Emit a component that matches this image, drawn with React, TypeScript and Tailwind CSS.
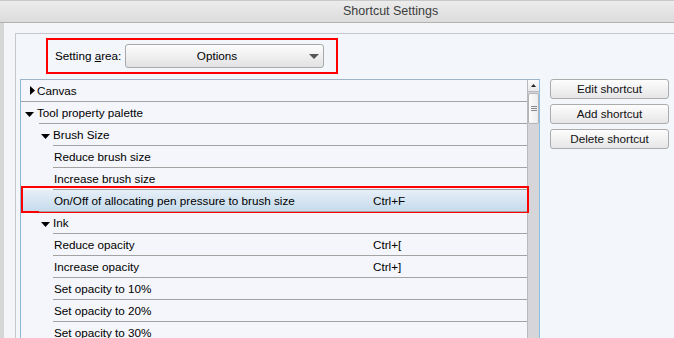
import React from "react";

type Row = {
  label: string;
  lead: number; // width from list inner left (x=21) to text start
  line: number | null; // offset of top separator line from x=21
  arrow?: "right" | "down";
  arrowPr?: number;
  shortcut?: string;
  selected?: boolean;
};

const rows: Row[] = [
  { label: "Canvas", lead: 16, line: null, arrow: "right", arrowPr: 2 },
  { label: "Tool property palette", lead: 16, line: 0, arrow: "down", arrowPr: 3 },
  { label: "Brush Size", lead: 32, line: 18, arrow: "down", arrowPr: 3 },
  { label: "Reduce brush size", lead: 33, line: 32 },
  { label: "Increase brush size", lead: 33, line: 32 },
  { label: "On/Off of allocating pen pressure to brush size", lead: 33, line: 32, shortcut: "Ctrl+F", selected: true },
  { label: "Ink", lead: 32, line: 18, arrow: "down", arrowPr: 3 },
  { label: "Reduce opacity", lead: 33, line: 32, shortcut: "Ctrl+[" },
  { label: "Increase opacity", lead: 33, line: 32, shortcut: "Ctrl+]" },
  { label: "Set opacity to 10%", lead: 33, line: 32 },
  { label: "Set opacity to 20%", lead: 33, line: 32 },
  { label: "Set opacity to 30%", lead: 33, line: 32 },
];

function Arrow({ dir }: { dir: "right" | "down" }) {
  if (dir === "right") {
    return (
      <svg width="5" height="9" viewBox="0 0 5 9" className="block">
        <polygon points="0,0 5,4.5 0,9" fill="#000" />
      </svg>
    );
  }
  return (
    <svg width="9" height="5" viewBox="0 0 9 5" className="block mt-[3px]">
      <polygon points="0,0 9,0 4.5,5" fill="#000" />
    </svg>
  );
}

function TreeRow({ row }: { row: Row }) {
  return (
    <div className="relative flex flex-col">
      {row.line !== null ? (
        <div className="h-px bg-[#a3a3a3]" style={{ marginLeft: row.line }} />
      ) : null}
      <div
        className={
          "h-[21px] flex items-center " +
          (row.selected ? "bg-gradient-to-b from-[#e6eff8] to-[#c6dbec]" : "")
        }
      >
        <div
          className="flex justify-end items-center shrink-0"
          style={{ width: row.lead, paddingRight: row.arrowPr ?? 0 }}
        >
          {row.arrow ? <Arrow dir={row.arrow} /> : null}
        </div>
        <div className="w-[319px] shrink-0 whitespace-nowrap">{row.label}</div>
        {row.shortcut ? <div className="whitespace-nowrap">{row.shortcut}</div> : null}
      </div>
      {row.selected ? (
        <div className="absolute top-[-3px] bottom-[-2px] left-0 right-[-2px] border-2 border-[#ff0000] pointer-events-none" />
      ) : null}
    </div>
  );
}

function Btn({ children }: { children: React.ReactNode }) {
  return (
    <div className="h-[20px] flex items-center justify-center rounded-[3px] border border-[#acacac] bg-gradient-to-b from-[#fdfdfd] to-[#e6e6e8] text-[#111]">
      {children}
    </div>
  );
}

export default function App() {
  return (
    <div
      className="w-[674px] h-[338px] overflow-hidden flex flex-col text-[11.7px] text-black bg-[#f3f5f9]"
      style={{ fontFamily: '"Liberation Sans", Arial, sans-serif' }}
    >
      {/* Title bar */}
      <div className="h-[23px] shrink-0 flex items-center border-t border-[#c9c9c9] border-b border-b-[#b2b2b2] bg-gradient-to-b from-[#ececec] to-[#dcdcdc]">
        <div className="pl-[343px] text-[12.5px] text-[#3c3c3c]">Shortcut Settings</div>
      </div>

      <div className="flex flex-1 min-h-0">
        <div className="w-[4px] shrink-0 bg-[#d6d6d6]" />
        <div className="flex-1 pl-[11px] pt-[10px] flex min-h-0">
          <div className="flex-1 border-l border-t border-[#c4c7cc] bg-[#f3f6fb] flex flex-col min-h-0">
            {/* Setting area */}
            <div className="mt-[4px] ml-[30px] w-[292px] h-[36px] border-2 border-[#ff0000] flex items-center pl-[7px] pr-[12px]">
              <div className="w-[70px] shrink-0 whitespace-nowrap">
                Setting <span className="underline">a</span>rea:
              </div>
              <div className="h-[24px] flex-1 flex items-center rounded-[3px] border border-[#a9a9a9] bg-gradient-to-b from-[#fdfdfd] to-[#e2e2e4]">
                <div className="flex-1 text-center">Options</div>
                <div className="w-[15px] pr-[4px] flex justify-end">
                  <svg width="10" height="5" viewBox="0 0 10 5" className="block">
                    <polygon points="0,0 10,0 5,5" fill="#555" />
                  </svg>
                </div>
              </div>
            </div>

            {/* List + buttons */}
            <div className="mt-[5px] ml-[4px] flex gap-[10px] min-h-0 flex-1">
              <div className="w-[520px] h-[300px] shrink-0 flex border-l border-t border-l-[#8fb6cf] border-t-[#9fb4c4] border-r border-r-[#86c2e4] bg-[#f4f6fb]">
                <div className="flex-1 flex flex-col">
                  {rows.map((r, i) => (
                    <TreeRow key={i} row={r} />
                  ))}
                </div>
                <div className="w-[12px] shrink-0 bg-[#d5d5da] border-l border-[#b9b9be] flex flex-col">
                  <div className="h-[12px] bg-gradient-to-b from-[#fafafa] to-[#e8e8ea] border-b border-[#b8b8bc] flex items-center justify-center">
                    <svg width="5" height="3" viewBox="0 0 5 3" className="block">
                      <polygon points="0,3 5,3 2.5,0" fill="#222" />
                    </svg>
                  </div>
                  <div className="mt-[1px] h-[31px] rounded-[2px] border border-[#b4b4b8] bg-gradient-to-r from-[#fbfbfb] to-[#ececee] flex flex-col items-center justify-center gap-[1px]">
                    <div className="w-[6px] h-px bg-[#8a8a8e]" />
                    <div className="w-[6px] h-px bg-[#8a8a8e]" />
                    <div className="w-[6px] h-px bg-[#8a8a8e]" />
                  </div>
                </div>
              </div>
              <div className="w-[119px] shrink-0 flex flex-col gap-[5px]">
                <Btn>Edit shortcut</Btn>
                <Btn>Add shortcut</Btn>
                <Btn>Delete shortcut</Btn>
              </div>
            </div>
          </div>
        </div>
      </div>
    </div>
  );
}
